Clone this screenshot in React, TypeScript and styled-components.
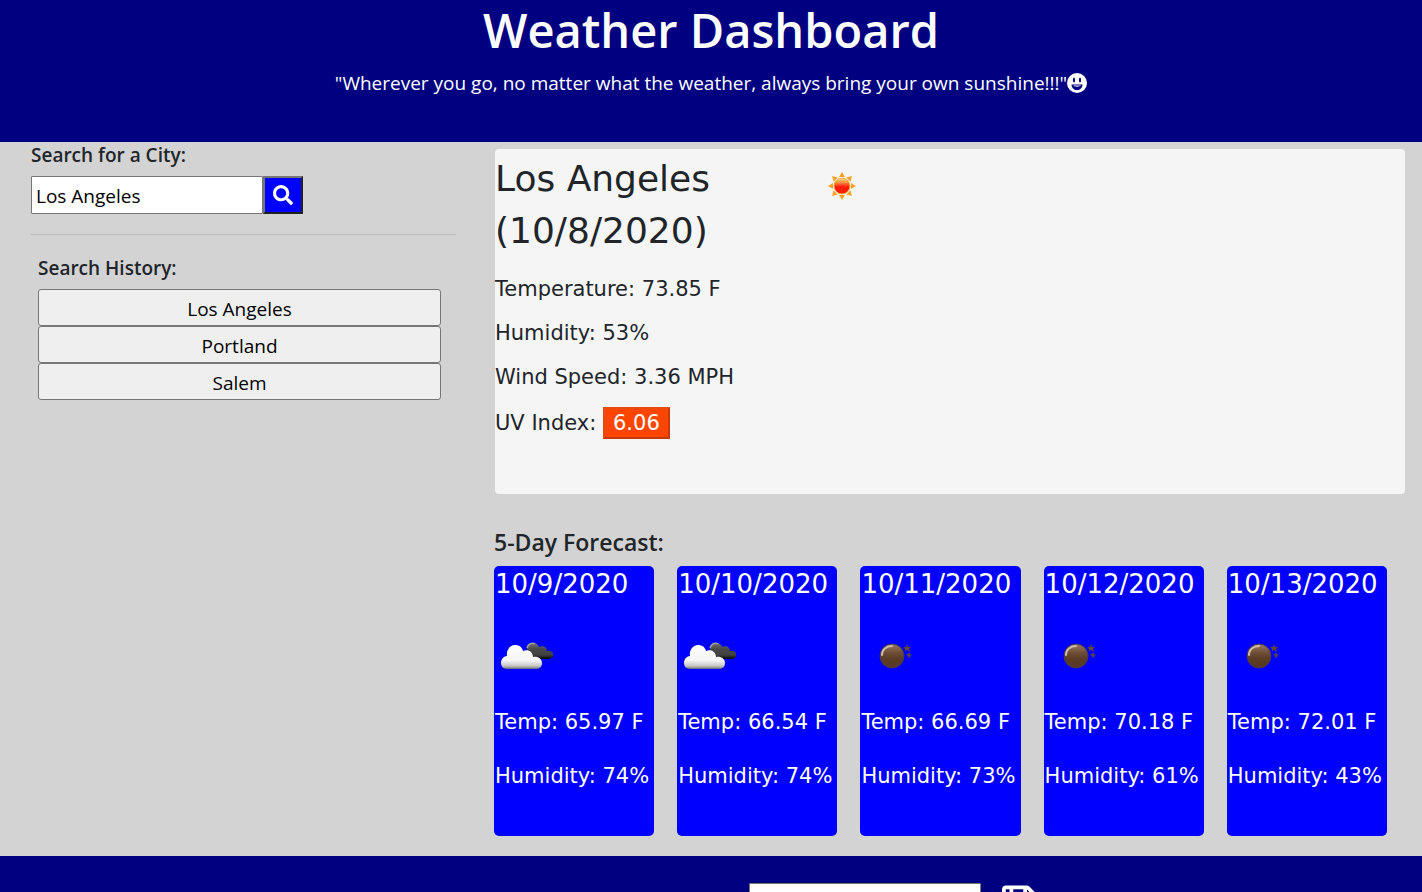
import React, { useState } from "react";
import styled, { createGlobalStyle } from "styled-components";
import { FaRegSave, FaSearch } from "react-icons/fa";

const GlobalStyle = createGlobalStyle`
  *, *::before, *::after { box-sizing: border-box; }
  body {
    margin: 0;
    background: #d3d3d3;
    color: #212529;
    font-family: "Open Sans", "Noto Sans", sans-serif;
    font-size: 19px;
    line-height: 30px;
  }
  h1, h2, h3, p { margin: 0; }
  button, input { font: inherit; }
`;

const Page = styled.div`
  height: 100vh;
  overflow: hidden;
`;

const Banner = styled.header`
  background: #000080;
  color: #fff;
  text-align: center;
  padding-bottom: 44px;
`;

const Title = styled.h1`
  font-size: 47px;
  font-weight: 600;
  line-height: 60px;
  margin-bottom: 8px;
`;

const Tagline = styled.p`
  display: flex;
  justify-content: center;
  align-items: center;
`;

const Main = styled.main`
  display: grid;
  grid-template-columns: 1fr 2fr;
  min-height: 714px;
`;

const Sidebar = styled.aside`
  padding: 0 18px 0 31px;
`;

const Label = styled.label`
  display: block;
  font-size: 19px;
  font-weight: 600;
  line-height: 26px;
  margin-bottom: 8px;
`;

const SearchRow = styled.form`
  display: flex;
`;

const TextBox = styled.input`
  width: 232px;
  height: 38px;
  padding: 3px 4px 1px;
  border: 1px solid #767676;
  border-radius: 1px;
  background: #fff;
  color: #000;
`;

const SearchButton = styled.button`
  display: flex;
  align-items: center;
  justify-content: center;
  width: 40px;
  height: 38px;
  padding: 0;
  border: 2px solid;
  border-color: #767676 #212121 #212121 #767676;
  background: #0000ff;
  color: #fff;
`;

const Rule = styled.hr`
  margin: 20px 0;
  border: 0;
  border-top: 1px solid #bdbdbd;
`;

const History = styled.section`
  display: flex;
  flex-direction: column;
  padding: 0 15px 0 7px;
`;

const HistoryTitle = styled.h2`
  font-size: 19px;
  font-weight: 600;
  line-height: 26px;
  margin-bottom: 8px;
`;

const HistoryButton = styled.button`
  height: 37px;
  padding: 2px 6px 0;
  border: 1px solid #767676;
  border-radius: 3px;
  background: #efefef;
  color: #000;
`;

const Content = styled.div`
  padding: 7px 17px 20px 20px;
`;

const Current = styled.section`
  display: flex;
  align-items: flex-start;
  gap: 100px;
  min-height: 345px;
  margin: 0 0 0 1px;
  padding-top: 1px;
  background: #f5f5f5;
  border-radius: 4px;
  font-family: "DejaVu Sans", Verdana, sans-serif;
  font-size: 21px;
`;

const Readings = styled.div`
  width: 232px;
  flex: none;
`;

const City = styled.h2`
  font-size: 36px;
  font-weight: 400;
  line-height: 52px;
  padding-top: 3px;
  margin-bottom: 17px;
`;

const Reading = styled.p`
  white-space: nowrap;
  margin-bottom: 14px;
`;

const UvReading = styled(Reading)`
  line-height: 34px;
`;

const UvBadge = styled.button`
  height: 32px;
  padding: 0 8px;
  border: 2px solid;
  border-color: #e64b12 #c43a08 #c43a08 #e64b12;
  background: #ff4500;
  color: #fff;
  line-height: 28px;
`;

const SunBox = styled.div`
  padding-top: 21px;
  line-height: 0;
`;

const ForecastTitle = styled.h2`
  font-size: 23px;
  font-weight: 600;
  line-height: 32px;
  margin: 32px 0 8px;
`;

const Days = styled.div`
  display: grid;
  grid-template-columns: repeat(5, 1fr);
  gap: 23px;
  padding-right: 18px;
`;

const Day = styled.article`
  min-height: 270px;
  padding: 2px 1px;
  border-radius: 5px;
  background: #0000ff;
  color: #fff;
  font-family: "DejaVu Sans", Verdana, sans-serif;
  font-size: 21px;
  white-space: nowrap;
`;

const DayDate = styled.h3`
  font-size: 26px;
  font-weight: 400;
  line-height: 32px;
  margin-bottom: 39px;
`;

const DayIcon = styled.div`
  height: 34px;
  margin-bottom: 34px;
  padding-left: 5px;
  line-height: 0;
`;

const DayReading = styled.p`
  margin-bottom: 24px;
`;

const Footer = styled.footer`
  display: flex;
  justify-content: flex-end;
  gap: 21px;
  background: #000080;
  color: #fff;
  padding: 27px 385px 40px 0;
`;

const SaveButton = styled.button`
  padding: 0;
  border: 0;
  background: none;
  color: #fff;
  line-height: 0;

  svg {
    width: 35px;
    height: 40px;
  }
`;

const Smile = () => (
  <svg width="20" height="20" viewBox="0 0 20 20" role="img" aria-label="Smile">
    <circle cx="10" cy="10" r="10" fill="#fff" />
    <ellipse cx="7" cy="7" rx="1.1" ry="2.5" fill="#000080" />
    <ellipse cx="13" cy="7" rx="1.1" ry="2.5" fill="#000080" />
    <path d="M4.5 11.5 H15.5 C15.5 15 13 17 10 17 C7 17 4.5 15 4.5 11.5 Z M6 12.5 C7 14 13 14 14 12.5 Z" fill="#000080" fillRule="evenodd" />
  </svg>
);

const Sun = () => (
  <svg width="30" height="30" viewBox="0 0 30 30" role="img" aria-label="Clear sky">
    <defs>
      <linearGradient id="sunCore" x1="0" y1="0" x2="0" y2="1">
        <stop offset="0" stopColor="#ffe08a" />
        <stop offset="0.3" stopColor="#ff8a3c" />
        <stop offset="0.55" stopColor="#ff1a0c" />
        <stop offset="1" stopColor="#ee2200" />
      </linearGradient>
    </defs>
    {[0, 45, 90, 135, 180, 225, 270, 315].map((a) => (
      <path key={a} d="M12 6 L15 1 L18 6 Z" fill="#f9a326" transform={`rotate(${a} 15 15)`} />
    ))}
    <circle cx="15" cy="15" r="8" fill="url(#sunCore)" stroke="#f9b040" strokeWidth="1" />
  </svg>
);

const Clouds = () => (
  <svg width="54" height="34" viewBox="0 0 54 34" role="img" aria-label="Broken clouds">
    <defs>
      <linearGradient id="cloudFront" x1="0" y1="0" x2="0" y2="1">
        <stop offset="0" stopColor="#ffffff" />
        <stop offset="0.65" stopColor="#f4f4f4" />
        <stop offset="0.88" stopColor="#c4c4c4" />
        <stop offset="1" stopColor="#66666f" />
      </linearGradient>
      <linearGradient id="cloudBack" x1="0" y1="0" x2="0" y2="1">
        <stop offset="0" stopColor="#707070" />
        <stop offset="0.4" stopColor="#484848" />
        <stop offset="0.75" stopColor="#404040" />
        <stop offset="1" stopColor="#050505" />
      </linearGradient>
    </defs>
    <path
      d="M27 20 V9 C27 6 30 4 33 4 C36 4 38 5 39 8 C43 6 47 8 47 12 C51 11 54 14 53 17 C53 19 50 20 48 20 Z"
      fill="url(#cloudBack)"
    />
    <path d="M27 9 C28 5 32 3 35 5" fill="none" stroke="#a0a0a0" strokeWidth="1.5" />
    <path
      d="M7 30 C3 30 1 27 1 24 C1 20 4 17 7 17 C6 11 10 6 15 6 C19 6 22 8 23 12 C28 10 33 13 33 18 C38 17 42 20 42 24 C42 28 39 30 36 30 Z"
      fill="url(#cloudFront)"
    />
  </svg>
);

const Moon = () => (
  <svg width="54" height="34" viewBox="0 0 54 34" role="img" aria-label="Clear night">
    <defs>
      <linearGradient id="moonDisc" x1="0" y1="0" x2="0" y2="1">
        <stop offset="0" stopColor="#9a7a60" />
        <stop offset="0.35" stopColor="#70503a" />
        <stop offset="0.6" stopColor="#5c3d26" />
        <stop offset="1" stopColor="#573820" />
      </linearGradient>
    </defs>
    <circle cx="26" cy="17" r="12" fill="url(#moonDisc)" stroke="#4b3858" strokeWidth="1" />
    <path d="M16 16 C16 11 20 7 26 7" fill="none" stroke="#d2bea8" strokeWidth="2" strokeLinecap="round" />
    <path d="M41 5 L42 8 L45 8 L43 10 L44 13 L41 11 L39 12 L39 10 L37 8 L40 8 Z" fill="#634538" />
    <path d="M43 13 L44 15 L46 16 L44 17 L45 19 L43 18 L41 19 L42 17 L40 15 L42 15 Z" fill="#5a4050" />
  </svg>
);

const history = ["Los Angeles", "Portland", "Salem"];

const days = [
  { date: "10/9/2020", icon: "clouds", temp: "65.97", humidity: "74" },
  { date: "10/10/2020", icon: "clouds", temp: "66.54", humidity: "74" },
  { date: "10/11/2020", icon: "moon", temp: "66.69", humidity: "73" },
  { date: "10/12/2020", icon: "moon", temp: "70.18", humidity: "61" },
  { date: "10/13/2020", icon: "moon", temp: "72.01", humidity: "43" },
];

export default function App() {
  const [city, setCity] = useState("Los Angeles");
  return (
    <Page>
      <GlobalStyle />
      <Banner>
        <Title>Weather Dashboard</Title>
        <Tagline>
          "Wherever you go, no matter what the weather, always bring your own sunshine!!!"
          <Smile />
        </Tagline>
      </Banner>
      <Main>
        <Sidebar>
          <Label htmlFor="city">Search for a City:</Label>
          <SearchRow onSubmit={(e) => e.preventDefault()}>
            <TextBox id="city" value={city} onChange={(e) => setCity(e.target.value)} />
            <SearchButton type="submit" aria-label="Search">
              <FaSearch size={20} />
            </SearchButton>
          </SearchRow>
          <Rule />
          <History>
            <HistoryTitle>Search History:</HistoryTitle>
            {history.map((name) => (
              <HistoryButton key={name} type="button" onClick={() => setCity(name)}>
                {name}
              </HistoryButton>
            ))}
          </History>
        </Sidebar>
        <Content>
          <Current>
            <Readings>
              <City>Los Angeles (10/8/2020)</City>
              <Reading>Temperature: 73.85 F</Reading>
              <Reading>Humidity: 53%</Reading>
              <Reading>Wind Speed: 3.36 MPH</Reading>
              <UvReading>
                UV Index: <UvBadge type="button">6.06</UvBadge>
              </UvReading>
            </Readings>
            <SunBox>
              <Sun />
            </SunBox>
          </Current>
          <ForecastTitle>5-Day Forecast:</ForecastTitle>
          <Days>
            {days.map((d) => (
              <Day key={d.date}>
                <DayDate>{d.date}</DayDate>
                <DayIcon>{d.icon === "clouds" ? <Clouds /> : <Moon />}</DayIcon>
                <DayReading>Temp: {d.temp} F</DayReading>
                <DayReading>Humidity: {d.humidity}%</DayReading>
              </Day>
            ))}
          </Days>
        </Content>
      </Main>
      <Footer>
        <TextBox aria-label="Email address" />
        <SaveButton type="button" aria-label="Save">
          <FaRegSave />
        </SaveButton>
      </Footer>
    </Page>
  );
}
